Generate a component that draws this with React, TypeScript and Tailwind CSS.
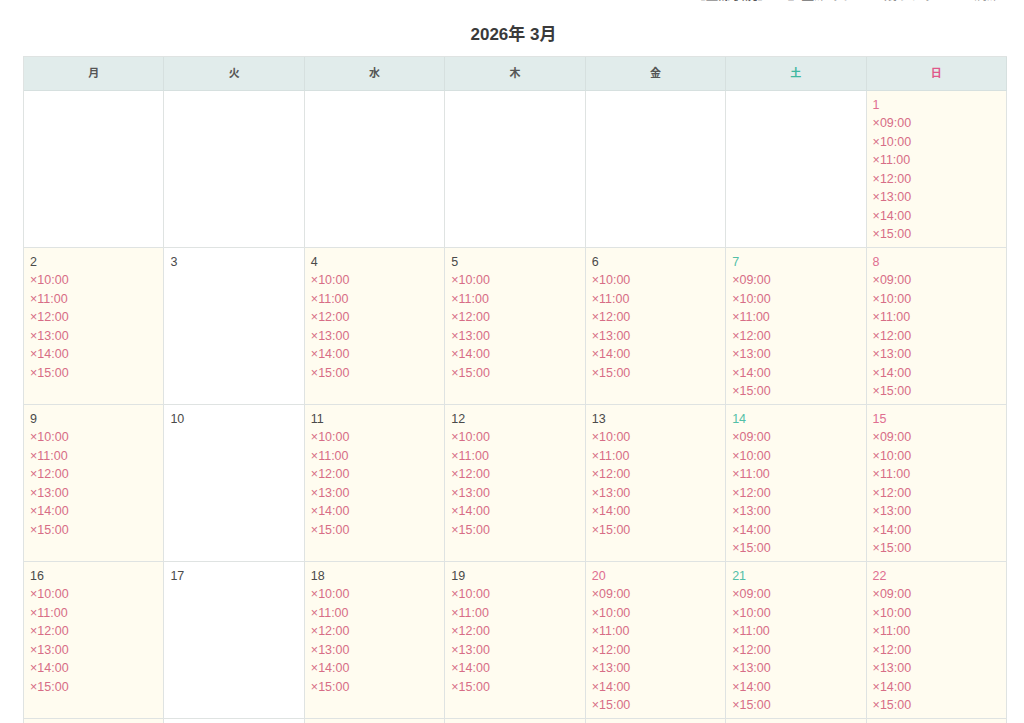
import React from "react";

type Cell = { day: number; kind: "wd" | "tue" | "sat" | "sun" | "hol" } | null;

const weekday = ["10:00", "11:00", "12:00", "13:00", "14:00", "15:00"];
const weekend = ["09:00", "10:00", "11:00", "12:00", "13:00", "14:00", "15:00"];

function buildWeeks(): Cell[][] {
  const cells: Cell[] = [null, null, null, null, null, null];
  for (let d = 1; d <= 31; d++) {
    const idx = cells.length % 7;
    let kind: "wd" | "tue" | "sat" | "sun" | "hol" = "wd";
    if (idx === 1) kind = "tue";
    if (idx === 5) kind = "sat";
    if (idx === 6) kind = "sun";
    if (d === 20) kind = "hol";
    cells.push({ day: d, kind });
  }
  while (cells.length % 7 !== 0) cells.push(null);
  const weeks: Cell[][] = [];
  for (let i = 0; i < cells.length; i += 7) weeks.push(cells.slice(i, i + 7));
  return weeks;
}

const heads = [
  { t: "月", c: "text-[#555555]" },
  { t: "火", c: "text-[#555555]" },
  { t: "水", c: "text-[#555555]" },
  { t: "木", c: "text-[#555555]" },
  { t: "金", c: "text-[#555555]" },
  { t: "土", c: "text-[#3fb8a0]" },
  { t: "日", c: "text-[#e0588a]" },
];

function DayCell({ cell }: { cell: Cell }) {
  if (!cell) {
    return <div className="h-[157px] border-r border-b border-[#dfe3e2] bg-white" />;
  }
  const slots =
    cell.kind === "tue" ? [] : cell.kind === "wd" ? weekday : weekend;
  const bg = cell.kind === "tue" ? "bg-white" : "bg-[#fffcf0]";
  const numColor =
    cell.kind === "sat"
      ? "text-[#52bfa7]"
      : cell.kind === "sun" || cell.kind === "hol"
      ? "text-[#e06e90]"
      : "text-[#4a4a4a]";
  return (
    <div
      className={`h-[157px] border-r border-b border-[#dfe3e2] ${bg} pl-[6px] pt-[5px] text-[12.5px] leading-[18.43px]`}
    >
      <div className={numColor}>{cell.day}</div>
      {slots.map((s) => (
        <div key={s} className="text-[#d76d86]">
          ×{s}
        </div>
      ))}
    </div>
  );
}

export default function App() {
  const weeks = buildWeeks();
  return (
    <div
      className="w-[1024px] h-[723px] overflow-hidden bg-white"
      style={{ fontFamily: '"Liberation Sans", "Noto Sans CJK JP", sans-serif' }}
    >
      <div className="h-[4px] overflow-hidden relative">
        <div className="absolute right-[24px] bottom-[1px] text-[13px] leading-[16px] text-[#888888] flex gap-[14px] whitespace-nowrap">
          <span className="font-bold text-[#555555]">【空席状況】</span>
          <span>◎ 空席あり</span>
          <span>△ 残りわずか</span>
          <span>× 満席</span>
        </div>
      </div>
      <div className="h-[52px] flex items-center justify-center text-[17px] font-bold text-[#3a3a3a] pt-[10px] pl-[3px]">
        2026年 3月
      </div>
      <div className="ml-[23px] w-[984px] border-l border-t border-[#dfe3e2]">
        <div className="grid grid-cols-7">
          {heads.map((h) => (
            <div
              key={h.t}
              className={`h-[34px] flex items-center justify-center bg-[#e1eceb] border-r border-b border-[#d6e0df] text-[11px] font-bold ${h.c}`}
            >
              {h.t}
            </div>
          ))}
        </div>
        {weeks.map((w, i) => (
          <div key={i} className="grid grid-cols-7">
            {w.map((c, j) => (
              <DayCell key={j} cell={c} />
            ))}
          </div>
        ))}
      </div>
    </div>
  );
}
